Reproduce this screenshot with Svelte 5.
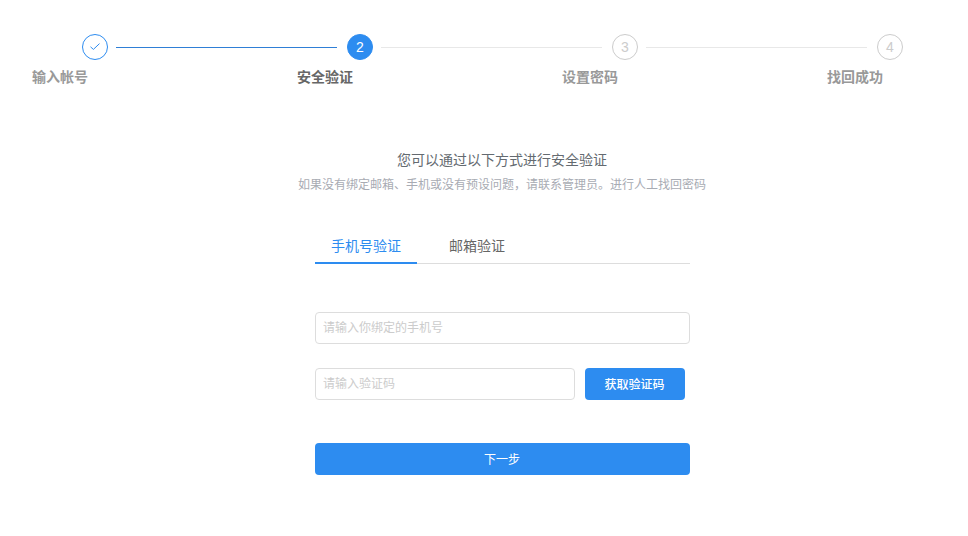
<script>
  const steps = [
    { label: '输入帐号', state: 'done' },
    { label: '安全验证', state: 'active' },
    { label: '设置密码', state: 'todo' },
    { label: '找回成功', state: 'todo' }
  ];
  let tab = $state('phone');
</script>

<div class="page">
  <ol class="steps">
    {#each steps as step, i}
      <li class="step {step.state}">
        <div class="head">
          <span class="dot">
            {#if step.state === 'done'}
              <svg width="12" height="12" viewBox="0 0 12 12" fill="none" stroke="#2d8cf0" stroke-width="1">
                <path d="M1.5 5.8 4.4 8.4 10.5 2.6" />
              </svg>
            {:else}
              {i + 1}
            {/if}
          </span>
          {#if i < steps.length - 1}
            <span class="line"></span>
          {/if}
        </div>
        <div class="label">{step.label}</div>
      </li>
    {/each}
  </ol>

  <div class="intro">
    <h2>您可以通过以下方式进行安全验证</h2>
    <p>如果没有绑定邮箱、手机或没有预设问题，请联系管理员。进行人工找回密码</p>
  </div>

  <form class="form" onsubmit={(e) => e.preventDefault()}>
    <div class="tabs">
      <button type="button" class="tab" class:on={tab === 'phone'} onclick={() => (tab = 'phone')}>手机号验证</button>
      <button type="button" class="tab" class:on={tab === 'mail'} onclick={() => (tab = 'mail')}>邮箱验证</button>
    </div>

    <input class="field" type="text" placeholder="请输入你绑定的手机号" />

    <div class="code-row">
      <input class="field" type="text" placeholder="请输入验证码" />
      <button type="button" class="btn code">获取验证码</button>
    </div>

    <button type="submit" class="btn next">下一步</button>
  </form>
</div>

<style>
  :global(body) {
    margin: 0;
    background: #fff;
    font-family: "Liberation Sans", "Noto Sans CJK SC", sans-serif;
  }

  .page {
    height: 536px;
    overflow: hidden;
    padding-top: 34px;
    box-sizing: border-box;
  }

  .steps {
    display: flex;
    list-style: none;
    margin: 0;
    padding: 0 0 0 82px;
  }

  .step {
    width: 265px;
    flex: none;
  }

  .head {
    display: flex;
    align-items: center;
    height: 26px;
  }

  .dot {
    width: 26px;
    height: 26px;
    box-sizing: border-box;
    flex: none;
    border: 1px solid #ccc;
    border-radius: 50%;
    display: flex;
    align-items: center;
    justify-content: center;
    font-size: 14px;
    color: #ccc;
  }

  .line {
    flex: 1;
    height: 1px;
    margin: 0 10px 0 8px;
    background: #e8e8e8;
  }

  .step.done .dot {
    border-color: #2d8cf0;
  }

  .step.done .line {
    background: #2f7fd6;
  }

  .step.active .dot {
    background: #2d8cf0;
    border-color: #2d8cf0;
    color: #fff;
  }

  .label {
    margin: 7px 0 0 -50px;
    font-size: 14px;
    line-height: 20px;
    font-weight: 700;
    color: #999;
  }

  .step.active .label {
    color: #666;
  }

  .intro {
    margin-top: 63px;
    text-align: center;
    padding-left: 36px;
  }

  .intro h2 {
    margin: 0;
    font-size: 14px;
    line-height: 20px;
    font-weight: 400;
    color: #646a70;
  }

  .intro p {
    margin: 5px 0 0;
    font-size: 12px;
    line-height: 20px;
    color: #a8abb3;
  }

  .form {
    width: 375px;
    margin: 35px 0 0 315px;
    display: flex;
    flex-direction: column;
  }

  .tabs {
    display: flex;
    border-bottom: 1px solid #ddd;
    margin-bottom: 48px;
  }

  .tab {
    border: 0;
    background: none;
    padding: 0 16px 2px;
    height: 34px;
    margin-bottom: -1px;
    font: inherit;
    font-size: 14px;
    color: #666;
    border-bottom: 2px solid transparent;
    cursor: pointer;
  }

  .tab + .tab {
    margin-left: 16px;
  }

  .tab.on {
    color: #2d8cf0;
    border-bottom-color: #2d8cf0;
  }

  .field {
    width: 100%;
    height: 32px;
    box-sizing: border-box;
    padding: 0 7px;
    border: 1px solid #ddd;
    border-radius: 4px;
    font: inherit;
    font-size: 12px;
    outline: none;
  }

  .field::placeholder {
    color: #ccc;
  }

  .code-row {
    display: flex;
    margin-top: 24px;
  }

  .code-row .field {
    width: 260px;
    flex: none;
  }

  .btn {
    border: 0;
    border-radius: 4px;
    height: 32px;
    padding: 0 1px 2px 0;
    background: #2d8cf0;
    color: #fff;
    font: inherit;
    font-size: 12px;
    cursor: pointer;
  }

  .code {
    width: 100px;
    margin-left: 10px;
    font-weight: 500;
  }

  .next {
    width: 100%;
    margin-top: 43px;
  }
</style>
